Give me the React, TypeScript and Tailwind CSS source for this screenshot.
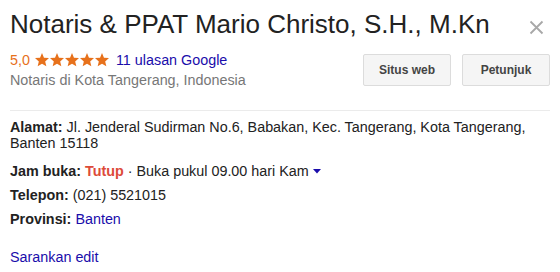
import React from "react";

function Star() {
  return (
    <svg width="14" height="14" viewBox="2 2 20 20" className="block">
      <path
        d="M12 17.27L18.18 21l-1.64-7.03L22 9.24l-7.19-.61L12 2 9.19 8.63 2 9.24l5.46 4.73L5.82 21z"
        fill="#e7711b"
      />
    </svg>
  );
}

export default function App() {
  return (
    <div
      className="w-[560px] h-[272px] bg-white text-[#222] overflow-hidden"
      style={{ fontFamily: '"Liberation Sans", Arial, sans-serif' }}
    >
      <div className="px-[10px] pt-[9px]">
        <div className="flex items-start justify-between">
          <h1 className="text-[26px] leading-[30px] font-normal text-[#222]">
            Notaris &amp; PPAT Mario Christo, S.H., M.Kn
          </h1>
          <button className="mt-[11px] mr-[6px]" aria-label="close">
            <svg width="15" height="15" viewBox="0 0 15 15" className="block">
              <path d="M1.5 1.5L13.5 13.5M13.5 1.5L1.5 13.5" stroke="#a8a8a8" strokeWidth="1.8" />
            </svg>
          </button>
        </div>
        <div className="flex items-start justify-between mt-[13px]">
          <div>
            <div className="flex items-center text-[14.35px] leading-[16px]">
              <span className="text-[#e7711b]">5,0</span>
              <span className="flex items-center gap-[1px] ml-[5px] mr-[7px]">
                <Star />
                <Star />
                <Star />
                <Star />
                <Star />
              </span>
              <a className="text-[#1a0dab]">11 ulasan Google</a>
            </div>
            <div className="text-[14.35px] leading-[16px] mt-[4px] text-[#777]">
              Notaris di Kota Tangerang, Indonesia
            </div>
          </div>
          <div className="flex gap-[11px] mt-[2px]">
            <button className="w-[88px] h-[32px] rounded-[2px] border border-[#dcdcdc] bg-[#f5f5f5] text-[12px] font-bold text-[#444]">
              Situs web
            </button>
            <button className="w-[88px] h-[32px] rounded-[2px] border border-[#dcdcdc] bg-[#f5f5f5] text-[12px] font-bold text-[#444]">
              Petunjuk
            </button>
          </div>
        </div>
        <div className="h-px bg-[#ebebeb] mt-[22px]" />
        <div className="text-[14.35px] leading-[16px] mt-[8px]">
          <div>
            <div>
              <span className="font-bold">Alamat:</span>{" "}
              <span>Jl. Jenderal Sudirman No.6, Babakan, Kec. Tangerang, Kota Tangerang,</span>
            </div>
            <div>Banten 15118</div>
          </div>
          <div className="mt-[12px] flex items-center">
            <span className="font-bold">Jam buka:</span>
            <span className="text-[#dd4b39] font-bold ml-[4px]">Tutup</span>
            <span className="ml-[4px]">· Buka pukul 09.00 hari Kam</span>
            <svg width="8" height="5" viewBox="0 0 8 5" className="ml-[4px] mt-[1px]">
              <path d="M0 0h8L4 4.5z" fill="#1a0dab" />
            </svg>
          </div>
          <div className="mt-[8px]">
            <span className="font-bold">Telepon:</span> (021) 5521015
          </div>
          <div className="mt-[8px]">
            <span className="font-bold">Provinsi:</span> <a className="text-[#1a0dab]">Banten</a>
          </div>
          <div className="mt-[22px]">
            <a className="text-[#1a0dab]">Sarankan edit</a>
          </div>
        </div>
      </div>
    </div>
  );
}
